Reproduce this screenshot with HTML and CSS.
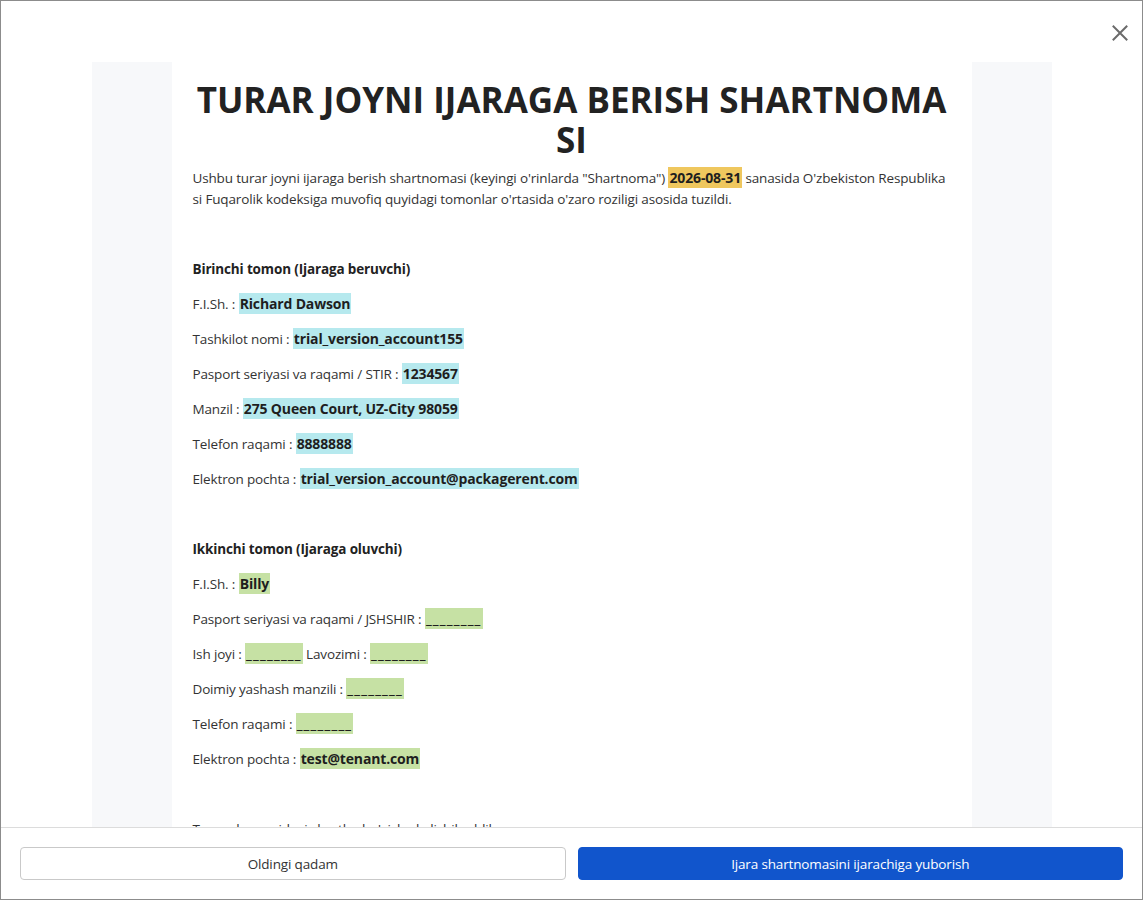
FILE: index.html
```html
<!DOCTYPE html>
<html lang="uz">
<head>
<meta charset="utf-8">
<title>Ijara shartnomasi</title>
<link rel="stylesheet" href="styles.css">
</head>
<body>
<div class="modal">
  <button class="close" aria-label="Yopish">
    <svg width="16" height="16" viewBox="0 0 16 16"><path d="M1.5 1.5 L14.5 14.5 M14.5 1.5 L1.5 14.5" stroke="#6b6b6b" stroke-width="2" fill="none" stroke-linecap="square"/></svg>
  </button>
  <div class="scroll">
    <div class="panel">
      <div class="page">
        <h1 class="title">TURAR JOYNI IJARAGA BERISH SHARTNOMA<br>SI</h1>
        <p class="para"><span class="line">Ushbu turar joyni ijaraga berish shartnomasi (keyingi o'rinlarda "Shartnoma") <span class="hl hl-date">2026-08-31</span> sanasida O'zbekiston Respublika</span><br>si Fuqarolik kodeksiga muvofiq quyidagi tomonlar o'rtasida o'zaro roziligi asosida tuzildi.</p>
        <p class="para">&nbsp;</p>
        <p class="para heading">Birinchi tomon (Ijaraga beruvchi)</p>
        <p class="para">F.I.Sh. : <span class="hl hl-a">Richard Dawson</span></p>
        <p class="para">Tashkilot nomi : <span class="hl hl-a">trial_version_account155</span></p>
        <p class="para">Pasport seriyasi va raqami / STIR : <span class="hl hl-a">1234567</span></p>
        <p class="para">Manzil : <span class="hl hl-a">275 Queen Court, UZ-City 98059</span></p>
        <p class="para">Telefon raqami : <span class="hl hl-a">8888888</span></p>
        <p class="para">Elektron pochta : <span class="hl hl-a">trial_version_account@packagerent.com</span></p>
        <p class="para">&nbsp;</p>
        <p class="para heading">Ikkinchi tomon (Ijaraga oluvchi)</p>
        <p class="para">F.I.Sh. : <span class="hl hl-b">Billy</span></p>
        <p class="para">Pasport seriyasi va raqami / JSHSHIR : <span class="hl hl-b blank">________</span></p>
        <p class="para">Ish joyi : <span class="hl hl-b blank">________</span> Lavozimi : <span class="hl hl-b blank">________</span></p>
        <p class="para">Doimiy yashash manzili : <span class="hl hl-b blank">________</span></p>
        <p class="para">Telefon raqami : <span class="hl hl-b blank">________</span></p>
        <p class="para">Elektron pochta : <span class="hl hl-b">test@tenant.com</span></p>
        <p class="para">&nbsp;</p>
        <p class="para">Tomonlar quyidagi shartlar bo'yicha kelishib oldilar:</p>
        <p class="para">&nbsp;</p>
      </div>
    </div>
  </div>
  <div class="footer">
    <button class="btn btn-secondary">Oldingi qadam</button>
    <button class="btn btn-primary">Ijara shartnomasini ijarachiga yuborish</button>
  </div>
</div>
</body>
</html>
```

FILE: styles.css
```css
html, body {
  margin: 0;
  padding: 0;
  height: 100%;
}
body {
  font-family: "Open Sans", "Noto Sans", "Liberation Sans", sans-serif;
  color: #2b2b2b;
  background: #fff;
}
.modal {
  position: relative;
  box-sizing: border-box;
  height: 900px;
  border: 1px solid #8c8c8c;
  display: flex;
  flex-direction: column;
  background: #fff;
  overflow: hidden;
}
.close {
  position: absolute;
  top: 23px;
  right: 13px;
  width: 18px;
  height: 18px;
  padding: 0;
  border: 0;
  background: transparent;
  display: flex;
  align-items: center;
  justify-content: center;
  cursor: pointer;
}
.scroll {
  flex: 1;
  overflow: hidden;
  padding-top: 61px;
}
.panel {
  width: 960px;
  margin: 0 auto;
  padding: 0 80px;
  box-sizing: border-box;
  background: #f7f8fa;
}
.page {
  background: #fff;
  padding: 18px 21px 40px;
  min-height: 900px;
}
.title {
  margin: 0 0 8px;
  text-align: center;
  font-size: 35px;
  line-height: 40px;
  font-weight: 700;
  color: #222;
}
.para {
  margin: 0 0 14px;
  font-size: 13.5px;
  letter-spacing: -0.15px;
  line-height: 21px;
  color: #333;
}
.line {
  white-space: nowrap;
}
.heading {
  font-weight: 700;
  color: #222;
}
.hl {
  font-size: 14px;
  line-height: 0;
  font-weight: 700;
  color: #1e1e1e;
  padding: 1px 1px;
}
.blank {
  letter-spacing: 1.2px;
}
.hl-date { background: #efc75e; }
.hl-a { background: #b6e9ee; }
.hl-b { background: #c6e1a4; }
.footer {
  border-top: 1px solid #dcdcdc;
  padding: 19px 19px;
  display: flex;
  gap: 12px;
  background: #fff;
}
.btn {
  flex: 1;
  height: 33px;
  border-radius: 4px;
  font-family: inherit;
  font-size: 13.5px;
  letter-spacing: -0.15px;
  cursor: pointer;
}
.btn-secondary {
  background: #fff;
  border: 1px solid #c9c9c9;
  color: #333;
}
.btn-primary {
  background: #1155cc;
  border: 1px solid #1155cc;
  color: #fff;
}
```
